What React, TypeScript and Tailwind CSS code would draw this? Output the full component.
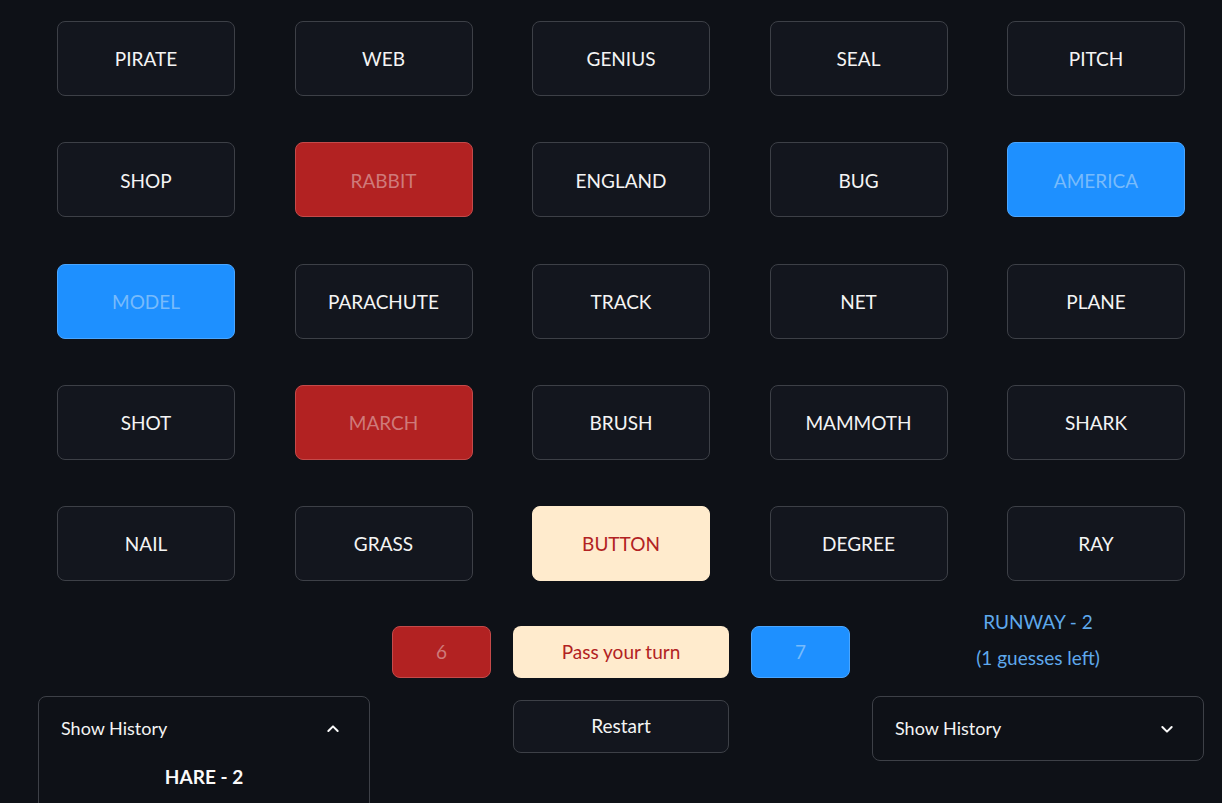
import React from 'react';

type Kind = 'plain' | 'red' | 'blue' | 'cream';

const board: [string, Kind][] = [
  ['PIRATE', 'plain'], ['WEB', 'plain'], ['GENIUS', 'plain'], ['SEAL', 'plain'], ['PITCH', 'plain'],
  ['SHOP', 'plain'], ['RABBIT', 'red'], ['ENGLAND', 'plain'], ['BUG', 'plain'], ['AMERICA', 'blue'],
  ['MODEL', 'blue'], ['PARACHUTE', 'plain'], ['TRACK', 'plain'], ['NET', 'plain'], ['PLANE', 'plain'],
  ['SHOT', 'plain'], ['MARCH', 'red'], ['BRUSH', 'plain'], ['MAMMOTH', 'plain'], ['SHARK', 'plain'],
  ['NAIL', 'plain'], ['GRASS', 'plain'], ['BUTTON', 'cream'], ['DEGREE', 'plain'], ['RAY', 'plain'],
];

const kindCls: Record<Kind, string> = {
  plain: 'bg-[#13161e] border-[#3d4047] text-[#f4f4f4]',
  red: 'bg-[#b22222] border-[#c44a4a] text-[#cf7a7a]',
  blue: 'bg-[#1e90ff] border-[#4aa6ff] text-[#78bbfb]',
  cream: 'bg-[#ffebcd] border-[#ffebcd] text-[#b22222]',
};

const Chevron = ({ up }: { up?: boolean }) => (
  <svg width="16" height="16" viewBox="0 0 24 24" fill="none" stroke="#fafafa" strokeWidth="3" strokeLinecap="round" strokeLinejoin="round">
    {up ? <path d="M5 15l7-7 7 7" /> : <path d="M5 9l7 7 7-7" />}
  </svg>
);

export default function App() {
  return (
    <div className="w-[1222px] h-[803px] overflow-hidden bg-[#0e1117]" style={{ fontFamily: '"Source Sans Pro", Lato, sans-serif' }}>
      <div className="pl-[57px] pt-[21px] grid grid-cols-[repeat(5,178px)] gap-x-[59.5px] gap-y-[46.25px]">
        {board.map(([w, k]) => (
          <div key={w} className={`h-[75px] pt-[2px] rounded-lg border flex items-center justify-center text-[19px] ${kindCls[k]}`}>
            {w}
          </div>
        ))}
      </div>

      <div className="mt-[45px] ml-[38px] flex gap-[22px] items-start">
        <div className="w-[332px] pt-[70px]">
          <div className="h-[140px] rounded-lg border border-[#3d4047]">
            <div className="h-[63px] px-[22px] flex items-center justify-between text-[#f4f4f4] text-[18px]">
              <span>Show History</span>
              <span className="mr-[6px]"><Chevron up /></span>
            </div>
            <div className="text-center text-[#fafafa] text-[19px] font-bold mt-[3px]">HARE - 2</div>
          </div>
        </div>
        <div className="w-[99px]">
          <div className="h-[52px] rounded-lg border bg-[#b22222] border-[#c44a4a] text-[#cf7a7a] flex items-center justify-center text-[19px]">6</div>
        </div>
        <div className="w-[216px] flex flex-col gap-[22px]">
          <div className="h-[52px] rounded-lg bg-[#ffebcd] text-[#b22222] flex items-center justify-center text-[19px]">Pass your turn</div>
          <div className="h-[53px] rounded-lg border border-[#3d4047] bg-[#13161e] text-[#f4f4f4] flex items-center justify-center text-[19px]">Restart</div>
        </div>
        <div className="w-[99px]">
          <div className="h-[52px] rounded-lg border bg-[#1e90ff] border-[#4aa6ff] text-[#78bbfb] flex items-center justify-center text-[19px]">7</div>
        </div>
        <div className="w-[332px] -mt-[22px]">
          <div className="text-center text-[#5fa9ec] text-[19px] leading-[36px]">
            <div>RUNWAY - 2</div>
            <div>(1 guesses left)</div>
          </div>
          <div className="mt-[20px] h-[65px] rounded-lg border border-[#3d4047] px-[22px] flex items-center justify-between text-[#f4f4f4] text-[18px]">
            <span>Show History</span>
            <span className="mr-[6px]"><Chevron /></span>
          </div>
        </div>
      </div>
    </div>
  );
}
